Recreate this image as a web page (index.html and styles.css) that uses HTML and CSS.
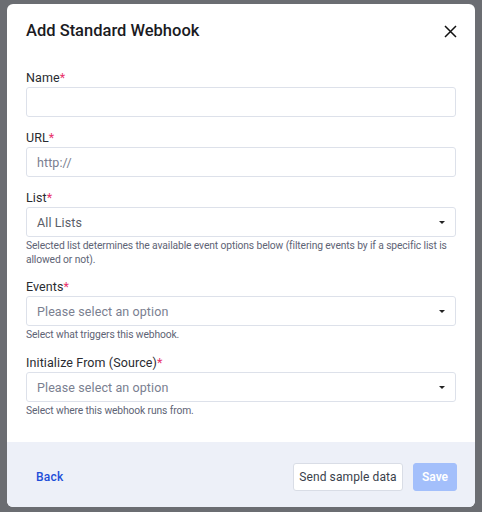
FILE: index.html
```html
<!DOCTYPE html>
<html lang="en">
<head>
<meta charset="utf-8">
<title>Add Standard Webhook</title>
<link rel="stylesheet" href="styles.css">
</head>
<body>
<div class="overlay">
  <div class="modal">
    <div class="modal-header">
      <h2 class="modal-title">Add Standard Webhook</h2>
      <button class="close" aria-label="Close">
        <svg width="13" height="13" viewBox="0 0 13 13"><path d="M1 1 L12 12 M12 1 L1 12" stroke="#111" stroke-width="1.5" fill="none"/></svg>
      </button>
    </div>
    <div class="modal-body">
      <div class="field">
        <label class="label">Name<span class="req">*</span></label>
        <div class="input"></div>
      </div>
      <div class="field">
        <label class="label">URL<span class="req">*</span></label>
        <div class="input"><span class="placeholder">http://</span></div>
      </div>
      <div class="field">
        <label class="label">List<span class="req">*</span></label>
        <div class="input select"><span class="value">All Lists</span><span class="caret"></span></div>
        <p class="help">Selected list determines the available event options below (filtering events by if a specific list is allowed or not).</p>
      </div>
      <div class="field">
        <label class="label">Events<span class="req">*</span></label>
        <div class="input select"><span class="placeholder">Please select an option</span><span class="caret"></span></div>
        <p class="help">Select what triggers this webhook.</p>
      </div>
      <div class="field last">
        <label class="label">Initialize From (Source)<span class="req">*</span></label>
        <div class="input select"><span class="placeholder">Please select an option</span><span class="caret"></span></div>
        <p class="help">Select where this webhook runs from.</p>
      </div>
    </div>
    <div class="modal-footer">
      <a class="back">Back</a>
      <div class="actions">
        <button class="btn btn-secondary">Send sample data</button>
        <button class="btn btn-primary">Save</button>
      </div>
    </div>
  </div>
</div>
</body>
</html>
```
FILE: styles.css
```css
* { box-sizing: border-box; }
html, body { margin: 0; padding: 0; }
body {
  width: 482px;
  height: 512px;
  background: #6b6d72;
  font-family: "Roboto", "Open Sans", sans-serif;
  overflow: hidden;
}
.overlay {
  padding: 4px 7px 0 7px;
}
.modal {
  width: 468px;
  height: 503px;
  background: #fff;
  border-radius: 6px;
  overflow: hidden;
  display: flex;
  flex-direction: column;
}
.modal-header {
  display: flex;
  align-items: center;
  justify-content: space-between;
  padding: 15px 18px 0 19px;
  height: 39px;
}
.modal-title {
  margin: 0;
  font-size: 16.5px;
  line-height: 24px;
  font-weight: 500;
  color: #1b1b1f;
  letter-spacing: 0;
}
.close {
  border: 0;
  background: none;
  padding: 0;
  width: 13px;
  height: 13px;
  display: flex;
}
.modal-body {
  padding: 27px 19px 0 19px;
  flex: 1;
}
.field { margin-bottom: 13px; }
.field.last { margin-bottom: 0; }
.label {
  display: block;
  font-size: 12.5px;
  line-height: 16px;
  color: #2a2c31;
  margin-bottom: 1px;
  letter-spacing: 0.1px;
}
.req { color: #e8336b; }
.input {
  height: 30px;
  border: 1px solid #dde1ea;
  border-radius: 3px;
  display: flex;
  align-items: center;
  padding: 0 10px 0 10px;
  font-size: 12.5px;
  letter-spacing: 0.1px;
}
.placeholder { color: #7a8090; }
.value { color: #5a5e68; }
.select { justify-content: space-between; }
.caret {
  width: 0;
  height: 0;
  border-left: 3px solid transparent;
  border-right: 3px solid transparent;
  border-top: 3px solid #222;
}
.help {
  margin: 2px 0 0 0;
  font-size: 10.3px;
  line-height: 14px;
  color: #5e6475;
  letter-spacing: -0.12px;
}
.field:nth-child(3) { margin-bottom: 12px; }
.modal-footer {
  height: 65px;
  background: #edf0f8;
  display: flex;
  align-items: center;
  justify-content: space-between;
  padding: 4px 18px 0 29px;
}
.back {
  color: #1d4ed8;
  font-size: 12px;
  font-weight: 500;
  letter-spacing: 0.2px;
}
.actions { display: flex; gap: 10px; }
.btn {
  height: 28px;
  font-family: inherit;
  font-size: 12px;
  font-weight: 500;
  border-radius: 3px;
  padding: 0;
  white-space: nowrap;
}
.btn-secondary {
  background: #fff;
  border: 1px solid #d9dde6;
  color: #3a3f4c;
  width: 110px;
  font-weight: 400;
  letter-spacing: 0.1px;
}
.btn-primary {
  background: #a3bffb;
  border: 1px solid #a3bffb;
  color: #fff;
  width: 44px;
  font-weight: 600;
}
```
